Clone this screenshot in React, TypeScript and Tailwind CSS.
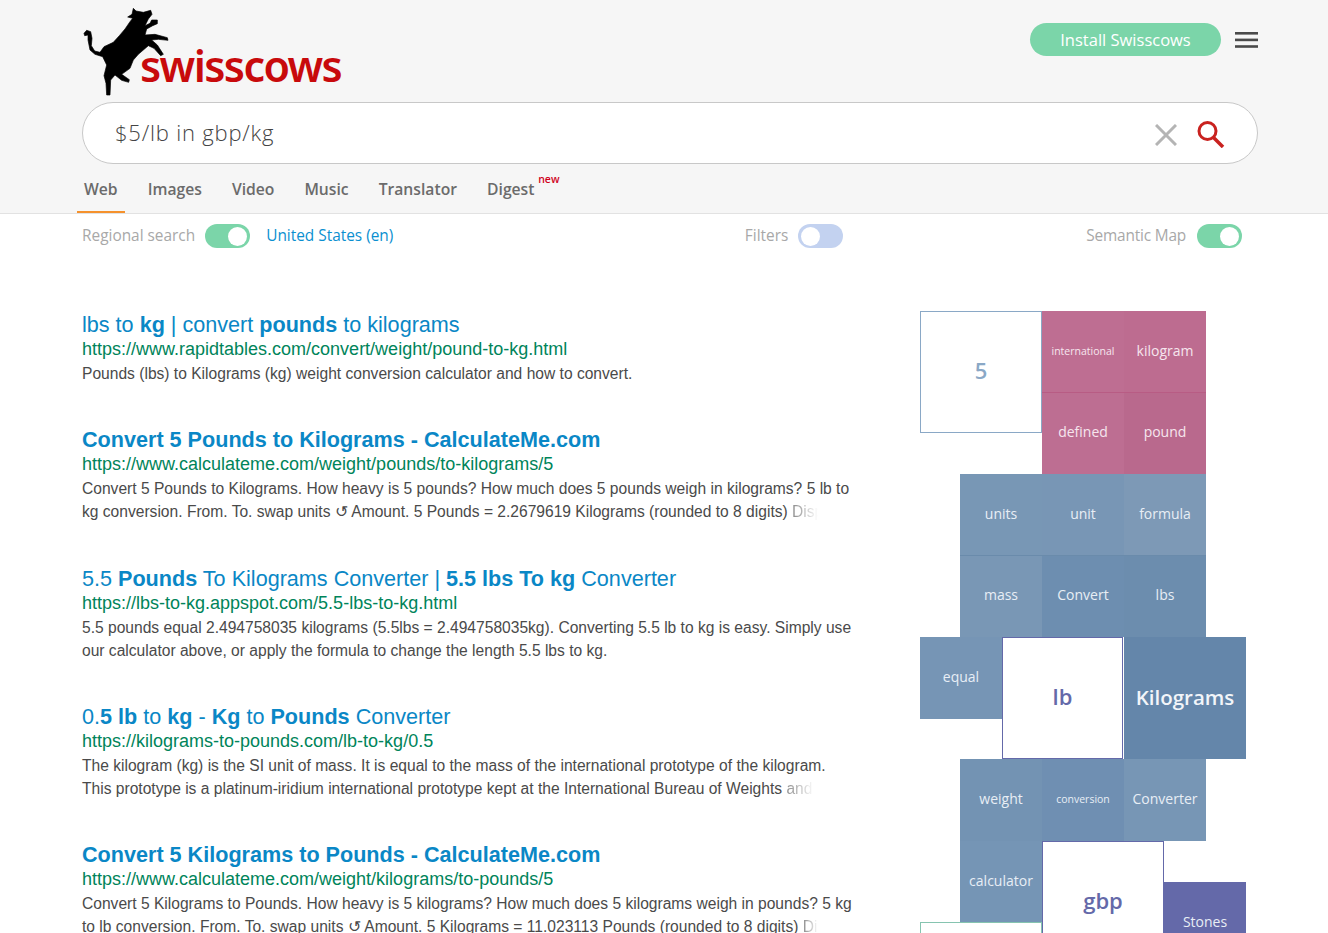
const uiFont = "font-['Open_Sans',sans-serif]";

const tabs = [
  { label: "Web", active: true },
  { label: "Images" },
  { label: "Video" },
  { label: "Music" },
  { label: "Translator" },
  { label: "Digest", badge: true },
];

const CowLogo = () => (
  <svg width="100" height="95" viewBox="0 0 300 285" className="mt-[5px] -ml-[2px] shrink-0">
    <path
      fill="#000"
      stroke="#000"
      strokeWidth="2"
      strokeLinejoin="round"
      d="M12 85 L20 76 L32 80 L36 100 L34 122 L44 138 L60 142 L72 125 L100 112 L118 92 L135 72 L150 50 L158 40 L143 36 L156 28 L160 10 L168 18 L190 22 L212 16 L216 28 L205 42 L195 62 L210 55 L215 45 L232 45 L232 56 L218 62 L200 72 L195 90 L225 88 L262 98 L264 106 L235 103 L215 105 L232 120 L250 148 L242 152 L222 130 L205 122 L175 148 L160 165 L150 190 L125 208 L148 224 L146 232 L125 226 L105 210 L92 225 L90 270 L80 270 L78 235 L72 212 L80 180 L68 155 L45 148 L30 135 L24 105 L24 90 L14 92 Z"
    />
  </svg>
);

const Toggle = ({ on }: { on?: boolean }) => (
  <span
    className={`flex h-6 w-[45px] items-center rounded-full px-[3px] ${
      on ? "justify-end bg-[#7bd5a9]" : "justify-start bg-[#c3d2f0]"
    }`}
  >
    <span className="h-[19px] w-[19px] rounded-full bg-white" />
  </span>
);

const Fade = ({ children, w }: { children: string; w: string }) => (
  <span className={`inline-block overflow-hidden whitespace-nowrap bg-gradient-to-r from-[#8a8a8a] to-white bg-clip-text align-bottom text-transparent ${w}`}>
    {children}
  </span>
);

const results = [
  {
    title: (
      <>
        lbs to <b>kg</b> | convert <b>pounds</b> to kilograms
      </>
    ),
    url: "https://www.rapidtables.com/convert/weight/pound-to-kg.html",
    lines: [<>Pounds (lbs) to Kilograms (kg) weight conversion calculator and how to convert.</>],
    mt: "",
  },
  {
    title: <b>Convert 5 Pounds to Kilograms - CalculateMe.com</b>,
    url: "https://www.calculateme.com/weight/pounds/to-kilograms/5",
    lines: [
      <>Convert 5 Pounds to Kilograms. How heavy is 5 pounds? How much does 5 pounds weigh in kilograms? 5 lb to</>,
      <>
        kg conversion. From. To. swap units ↺ Amount. 5 Pounds = 2.2679619 Kilograms (rounded to 8 digits) <Fade w="w-[26px]">Display</Fade>
      </>,
    ],
    mt: "mt-[42px]",
  },
  {
    title: (
      <>
        5.5 <b>Pounds</b> To Kilograms Converter | <b>5.5 lbs To kg</b> Converter
      </>
    ),
    url: "https://lbs-to-kg.appspot.com/5.5-lbs-to-kg.html",
    lines: [
      <>5.5 pounds equal 2.494758035 kilograms (5.5lbs = 2.494758035kg). Converting 5.5 lb to kg is easy. Simply use</>,
      <>our calculator above, or apply the formula to change the length 5.5 lbs to kg.</>,
    ],
    mt: "mt-[43px]",
  },
  {
    title: (
      <>
        0.<b>5 lb</b> to <b>kg</b> - <b>Kg</b> to <b>Pounds</b> Converter
      </>
    ),
    url: "https://kilograms-to-pounds.com/lb-to-kg/0.5",
    lines: [
      <>The kilogram (kg) is the SI unit of mass. It is equal to the mass of the international prototype of the kilogram.</>,
      <>
        This prototype is a platinum-iridium international prototype kept at the International Bureau of Weights <Fade w="w-[28px]">and</Fade>
      </>,
    ],
    mt: "mt-[42px]",
  },
  {
    title: <b>Convert 5 Kilograms to Pounds - CalculateMe.com</b>,
    url: "https://www.calculateme.com/weight/kilograms/to-pounds/5",
    lines: [
      <>Convert 5 Kilograms to Pounds. How heavy is 5 kilograms? How much does 5 kilograms weigh in pounds? 5 kg</>,
      <>
        to lb conversion. From. To. swap units ↺ Amount. 5 Kilograms = 11.023113 Pounds (rounded to 8 digits) <Fade w="w-[15px]">Display</Fade>
      </>,
    ],
    mt: "mt-[42px]",
  },
];

// place on the semantic map grid
const tiles = [
  { t: "5", c: "col-start-1 col-span-3 row-start-1 row-span-3 pb-[4px] border border-[#8aa8c6] bg-white text-[#8aa8c6] text-[22px] font-semibold" },
  { t: "international", c: "col-start-4 col-span-2 row-start-1 row-span-2 pt-[2px] border-b border-[#b85c84] bg-[#be6e92] text-[#f6e6ee] text-[10.5px]" },
  { t: "kilogram", c: "col-start-6 col-span-2 row-start-1 row-span-2 pb-[2px] border-b border-[#b85c84] bg-[#bd6c90] text-[#f6e6ee] text-[14px]" },
  { t: "defined", c: "col-start-4 col-span-2 row-start-3 row-span-2 pb-[4px] bg-[#bd6e92] text-[#f6e6ee] text-[14px]" },
  { t: "pound", c: "col-start-6 col-span-2 row-start-3 row-span-2 pb-[4px] bg-[#b9698d] text-[#f6e6ee] text-[14px]" },
  { t: "units", c: "col-start-2 col-span-2 row-start-5 row-span-2 pb-[2px] border-b border-[#6a8bab] bg-[#7897b5] text-[#e8eef5] text-[14px]" },
  { t: "unit", c: "col-start-4 col-span-2 row-start-5 row-span-2 pb-[2px] border-b border-[#6a8bab] bg-[#7896b5] text-[#e8eef5] text-[14px]" },
  { t: "formula", c: "col-start-6 col-span-2 row-start-5 row-span-2 pb-[2px] border-b border-[#6a8bab] bg-[#7d99b6] text-[#e8eef5] text-[14px]" },
  { t: "mass", c: "col-start-2 col-span-2 row-start-7 row-span-2 pb-[4px] bg-[#7997b5] text-[#e8eef5] text-[14px]" },
  { t: "Convert", c: "col-start-4 col-span-2 row-start-7 row-span-2 pb-[4px] bg-[#6d8eb0] text-[#e8eef5] text-[14px]" },
  { t: "lbs", c: "col-start-6 col-span-2 row-start-7 row-span-2 pb-[4px] bg-[#6c8dae] text-[#e8eef5] text-[14px]" },
  { t: "equal", c: "col-start-1 col-span-2 row-start-9 row-span-2 pb-[2px] bg-[#7695b5] text-[#e8eef5] text-[14px]" },
  { t: "lb", c: "col-start-3 col-span-3 row-start-9 row-span-3 mr-[1px] pb-[4px] border border-[#6469a9] bg-white text-[#6469a9] text-[22px] font-semibold" },
  { t: "Kilograms", c: "col-start-6 col-span-3 row-start-9 row-span-3 pb-[2px] bg-[#6486aa] text-[#f2f5f9] text-[20.5px] font-semibold" },
  { t: "weight", c: "col-start-2 col-span-2 row-start-12 row-span-2 pb-[4px] bg-[#7393b3] text-[#e8eef5] text-[14px]" },
  { t: "conversion", c: "col-start-4 col-span-2 row-start-12 row-span-2 bg-[#6f8fb2] text-[#e8eef5] text-[10.5px]" },
  { t: "Converter", c: "col-start-6 col-span-2 row-start-12 row-span-2 pb-[4px] bg-[#7796b5] text-[#e8eef5] text-[14px]" },
  { t: "calculator", c: "col-start-2 col-span-2 row-start-14 row-span-2 pb-[2px] bg-[#7595b5] text-[#e8eef5] text-[14px]" },
  { t: "gbp", c: "col-start-4 col-span-3 row-start-14 row-span-3 pb-[2px] border border-[#6469a9] bg-white text-[#6469a9] text-[22px] font-semibold" },
  { t: "Stones", c: "col-start-7 col-span-2 row-start-15 row-span-2 pb-[2px] bg-[#6469a9] text-[#e8eef5] text-[14px]" },
  { t: "", c: "col-start-1 col-span-3 row-start-16 row-span-3 border border-[#86c4b0] bg-white" },
];

export default function App() {
  return (
    <div className={`h-[933px] w-[1328px] overflow-hidden bg-white ${uiFont}`}>
      <header className="h-[214px] border-b border-[#e2e2e2] bg-[#f6f6f6]">
        <div className="ml-[82px] w-[1176px]">
          <div className="flex h-[102px] items-start justify-between">
            <div className="flex">
              <CowLogo />
              <span className="mt-[41px] -ml-[40px] font-['Noto_Sans',sans-serif] text-[43px] leading-[50px] font-semibold tracking-[-1.6px] text-[#c80a0c]">
                swisscows
              </span>
            </div>
            <div className="mt-[23px] flex items-center gap-[14px]">
              <span className="flex h-[33px] w-[191px] items-center justify-center rounded-full bg-[#7bd5a9] pt-[1px] text-[16.5px] text-white">
                Install Swisscows
              </span>
              <svg width="23" height="16" viewBox="0 0 23 16" fill="#4a4a4a">
                <rect y="0" width="23" height="2.6" />
                <rect y="6.6" width="23" height="2.6" />
                <rect y="13.2" width="23" height="2.6" />
              </svg>
            </div>
          </div>
          <div className="flex h-[62px] items-center rounded-full border border-[#c8c8c8] bg-white pr-[32px] pl-[32px]">
            <span className="-mt-[2px] flex-1 text-[22px] font-light tracking-[0.8px] text-[#444]">$5/lb in gbp/kg</span>
            <svg width="22" height="22" viewBox="0 0 22 22" className="mt-[4px] mr-[20px] stroke-[#b4b4b4]" strokeWidth="3" fill="none">
              <path d="M1 1 L21 21 M21 1 L1 21" />
            </svg>
            <svg width="28" height="28" viewBox="0 0 28 28" className="mt-[1px] stroke-[#c9221f]" fill="none">
              <circle cx="10.5" cy="11" r="8.5" strokeWidth="3" />
              <path d="M16.5 17.5 L26 27" strokeWidth="3.5" />
            </svg>
          </div>
          <nav className="mt-[13px] -ml-[5px] flex items-start gap-[16px]">
            {tabs.map((tab) => (
              <div
                key={tab.label}
                className={`relative h-[36px] px-[7px] text-[15.7px] leading-[24px] font-semibold text-[#6b6b6b] ${
                  tab.active ? "border-b-2 border-[#f5912c]" : ""
                }`}
              >
                {tab.label}
                {tab.badge && (
                  <span className="absolute -top-[5px] -right-[18px] text-[10.5px] leading-[14px] font-semibold text-[#d0021b]">new</span>
                )}
              </div>
            ))}
          </nav>
        </div>
      </header>

      <div className="ml-[82px] flex h-[44px] w-[1160px] items-center text-[15.4px] text-[#a8a8a8]">
        <span>Regional search</span>
        <span className="ml-[10px]"><Toggle on /></span>
        <span className="ml-[16px] text-[#0b8fd0]">United States (en)</span>
        <span className="ml-auto">Filters</span>
        <span className="ml-[10px]"><Toggle /></span>
        <span className="ml-[243px] tracking-[-0.18px]">Semantic Map</span>
        <span className="ml-[11px]"><Toggle on /></span>
      </div>

      <main className="ml-[82px] flex items-start">
        <section className="mt-[54px] w-[838px] shrink-0 font-['Liberation_Sans',sans-serif]">
          {results.map((r, i) => (
            <article key={i} className={r.mt}>
              <h2 className="text-[21.6px] leading-[26px] font-normal text-[#0a87c6]">{r.title}</h2>
              <div className="text-[18px] leading-[22px] text-[#00845a]">{r.url}</div>
              <div className="mt-[2px] text-[15.6px] leading-[23px] text-[#4a4a4a]">
                {r.lines.map((l, j) => (
                  <p key={j} className="whitespace-nowrap">{l}</p>
                ))}
              </div>
            </article>
          ))}
        </section>
        <aside className="mt-[53px] grid w-[326px] shrink-0 grid-cols-[40px_42px_40px_41px_41px_40px_42px_40px] auto-rows-[40.75px]">
          {tiles.map((tile, i) => (
            <div key={i} className={`flex items-center justify-center ${tile.c}`}>
              {tile.t}
            </div>
          ))}
        </aside>
      </main>
    </div>
  );
}
